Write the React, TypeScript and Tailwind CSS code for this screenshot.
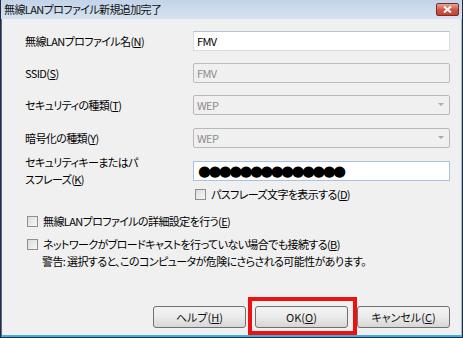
import React from "react";

const font = { fontFamily: '"Noto Sans CJK JP", "Noto Sans", sans-serif', fontFeatureSettings: '"palt"' } as React.CSSProperties;

function U({ c }: { c: string }) {
  return <span className="underline underline-offset-[1px]">{c}</span>;
}

function Label({ t, k }: { t: string; k: string }) {
  return (
    <span>
      {t}(<U c={k} />)
    </span>
  );
}

function Checkbox() {
  return (
    <span className="inline-block w-[11px] h-[11px] border border-[#8e8f8f] bg-gradient-to-br from-[#dcdcdc] to-[#f7f7f7] shrink-0" />
  );
}

function SelectBox({ v }: { v: string }) {
  return (
    <div className="w-[257px] h-[20px] border border-[#b9b9b9] rounded-[2px] bg-[#f0f0f0] flex items-center justify-between pl-[3px] pr-[5px] text-[#8d8d8d]">
      <span>{v}</span>
      <svg width="6" height="4" viewBox="0 0 6 4">
        <path d="M0 0 L6 0 L3 3 Z" fill="#a9a9a9" />
      </svg>
    </div>
  );
}

function Btn({ children }: { children: React.ReactNode }) {
  return (
    <div className="w-[93px] h-[22px] border border-[#707070] rounded-[3px] bg-gradient-to-b from-[#f3f3f3] via-[#ebebeb] to-[#d6d6d6] flex items-center justify-center text-[#111]">
      {children}
    </div>
  );
}

export default function App() {
  return (
    <div className="w-[463px] h-[338px] flex flex-col bg-[#1d2d46] pl-[1px] pr-[1px] pb-[1px] text-[11px] tracking-[-0.6px] text-black" style={font}>
      <div className="h-[19px] flex items-center justify-between bg-gradient-to-b from-[#c3d4e9] to-[#d6e2f0] pl-[3px] pr-[3px] shrink-0">
        <span className="text-[#111]">無線LANプロファイル新規追加完了</span>
        <div className="w-[23px] h-[13px] rounded-[2px] border border-[#7a2b22] bg-gradient-to-b from-[#e5a699] via-[#cc5a4a] to-[#c7402f] flex items-center justify-center">
          <svg width="9" height="7" viewBox="0 0 9 7">
            <path d="M1 0.5 L8 6.5 M8 0.5 L1 6.5" stroke="#fff" strokeWidth="2" />
          </svg>
        </div>
      </div>
      <div className="flex-1 flex flex-col bg-[#f0f0f0] border-l border-[#5b6b82] border-r border-r-[#9fb8d1] border-b-2 border-b-[#3cb0e0] pl-[23px] pr-[10px] pt-[12px]">
        <div className="flex items-center h-[20px]">
          <div className="w-[168px]"><Label t="無線LANプロファイル名" k="N" /></div>
          <div className="w-[257px] h-[20px] border border-[#d7dde5] border-t-[#b9c1cb] bg-white flex items-center pl-[3px]">FMV</div>
        </div>
        <div className="flex items-center h-[20px] mt-[12px]">
          <div className="w-[168px]"><Label t="SSID" k="S" /></div>
          <div className="w-[257px] h-[20px] border border-[#bcbcbc] rounded-[2px] bg-[#f0f0f0] flex items-center pl-[3px] text-[#8d8d8d]">FMV</div>
        </div>
        <div className="flex items-center h-[20px] mt-[12px]">
          <div className="w-[168px]"><Label t="セキュリティの種類" k="T" /></div>
          <SelectBox v="WEP" />
        </div>
        <div className="flex items-center h-[20px] mt-[13px]">
          <div className="w-[168px]"><Label t="暗号化の種類" k="Y" /></div>
          <SelectBox v="WEP" />
        </div>
        <div className="flex items-center mt-[6px]">
          <div className="w-[168px] leading-[17px]">
            セキュリティキーまたはパ<br />
            <Label t="スフレーズ" k="K" />
          </div>
          <div className="w-[257px] h-[20px] border border-[#a6c3df] bg-white flex items-center pl-[4px] text-[15px] leading-none tracking-[-2.7px]" style={{ fontFamily: '"DejaVu Sans", sans-serif' }}>
            ●●●●●●●●●●●●●●
          </div>
        </div>
        <div className="flex items-center gap-[5px] ml-[170px] mt-[-1px] h-[14px]">
          <Checkbox />
          <Label t="パスフレーズ文字を表示する" k="D" />
        </div>
        <div className="flex items-center gap-[5px] mt-[13px] h-[14px] ml-[2px]">
          <Checkbox />
          <Label t="無線LANプロファイルの詳細設定を行う" k="E" />
        </div>
        <div className="flex items-center gap-[5px] mt-[9px] h-[14px] ml-[2px]">
          <Checkbox />
          <Label t="ネットワークがブロードキャストを行っていない場合でも接続する" k="B" />
        </div>
        <div className="ml-[17px] mt-[3px] h-[14px] flex items-center">
          警告: 選択すると、このコンピュータが危険にさらされる可能性があります。
        </div>
        <div className="flex justify-end gap-[9px] mt-auto mb-[7px] mr-[1px] tracking-normal">
          <Btn><Label t="ヘルプ" k="H" /></Btn>
          <div className="relative">
            <Btn><Label t="OK" k="O" /></Btn>
            <div className="absolute left-[-7px] right-[-9px] top-[-9px] bottom-[-7px] border-[4px] border-[#ee1111]" />
          </div>
          <Btn><Label t="キャンセル" k="C" /></Btn>
        </div>
      </div>
    </div>
  );
}
